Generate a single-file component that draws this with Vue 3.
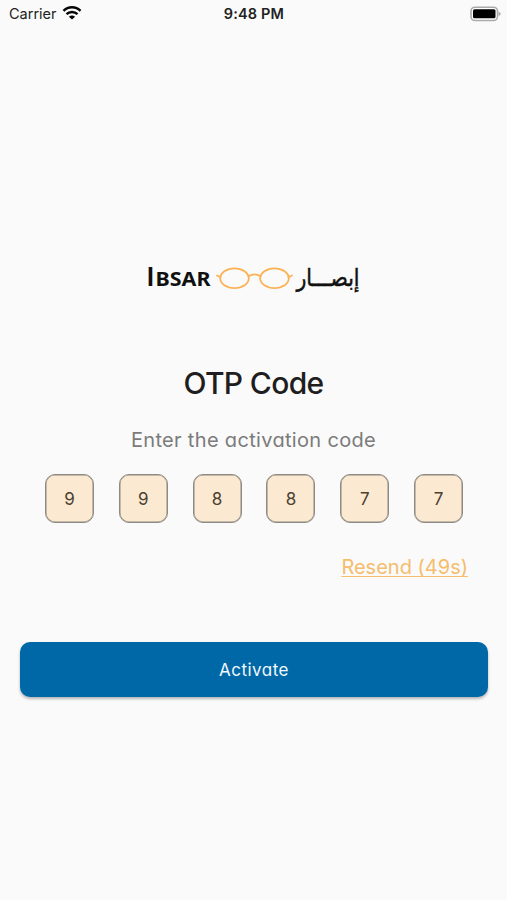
<script setup>
import { ref } from 'vue'

const digits = ref(['9', '9', '8', '8', '7', '7'])
const seconds = ref(49)
</script>

<template>
  <main class="screen">
    <header class="status">
      <div class="carrier">
        <span>Carrier</span>
        <svg class="wifi" width="20" height="15" viewBox="0 0 20 15">
          <path d="M1.500 4.900C6.200 .1 13.800 .1 18.500 4.900" />
          <path d="M4.500 8.200C7.500 5.200 12.500 5.200 15.500 8.200" />
          <path class="dot" d="M10 13.600L6.900 10.700C8.600 9 11.400 9 13.100 10.700Z" />
        </svg>
      </div>
      <span class="time">9:48 PM</span>
      <svg class="battery" width="31" height="16" viewBox="0 0 31 16">
        <rect class="shell" x="1" y="1.200" width="26.500" height="13.300" rx="4" />
        <rect x="3" y="3.300" width="22.500" height="9" rx="1.500" />
        <path class="tip" d="M28.500 5.500Q33 7.800 28.500 10.200Z" />
      </svg>
    </header>

    <svg class="logo" width="230" height="50" viewBox="0 0 230 50">
      <text class="latin initial" x="6.500" y="31" font-size="26.500">I</text>
      <text class="latin" x="15.500" y="31" font-size="19.500" textLength="55" lengthAdjust="spacingAndGlyphs">BSAR</text>
      <g class="glasses">
        <ellipse cx="94.500" cy="23.300" rx="14.300" ry="9.900" />
        <ellipse cx="134.500" cy="23.300" rx="14.300" ry="9.900" />
        <path d="M108.500 21.200Q114.500 17.500 120.500 21.200M77 20.500Q79 21.800 80.700 22M152 20.500Q150 21.800 148.300 22" />
      </g>
      <text class="arabic" x="156.500" y="30.500" font-size="24" textLength="63" lengthAdjust="spacingAndGlyphs">إبصـــار</text>
    </svg>

    <h1>OTP Code</h1>
    <p class="hint">Enter the activation code</p>

    <div class="otp">
      <span v-for="(digit, i) in digits" :key="i" class="cell">{{ digit }}</span>
    </div>

    <a class="resend">Resend ({{ seconds }}s)</a>
    <button class="activate" type="button">Activate</button>
  </main>
</template>

<style>
body {
  background: #fafafa;
}
</style>

<style scoped>
.screen {
  box-sizing: border-box;
  width: 507px;
  height: 900px;
  display: flex;
  flex-direction: column;
  background: #fafafa;
  color: #1e1e20;
  font-family: Inter, "Liberation Sans", sans-serif;
  font-feature-settings: "cv11", "ss03";
}
.status {
  display: grid;
  grid-template-columns: 1fr auto 1fr;
  align-items: center;
  height: 27px;
  padding: 0 6px 0 7px;
  color: #222;
  font-size: 14.500px;
  font-feature-settings: normal;
}
.carrier {
  display: flex;
  align-items: center;
  gap: 5px;
  padding-left: 2px;
}
.wifi {
  fill: none;
  stroke: #050505;
  stroke-width: 2.500;
}
.wifi .dot {
  fill: #050505;
  stroke: none;
}
.time {
  font-weight: 600;
  letter-spacing: 0.150px;
}
.battery {
  justify-self: end;
}
.shell {
  fill: #fff;
  stroke: #aaa;
  stroke-width: 1.600;
}
.tip {
  fill: #aaa;
}
.logo {
  margin: 228px 0 0 140px;
  overflow: visible;
}
.latin {
  fill: #101010;
  font-family: "Noto Sans", "Open Sans", sans-serif;
  font-weight: 700;
}
.latin.initial {
  font-family: Lato, sans-serif;
}
.arabic {
  fill: #101010;
  stroke: #101010;
  stroke-width: 0.500;
  font-family: "DejaVu Sans", sans-serif;
}
.glasses {
  fill: none;
  stroke: #fbb254;
  stroke-width: 1.800;
  stroke-linecap: round;
}
h1 {
  margin: 58px 0 0;
  text-align: center;
  font-size: 30px;
  line-height: 40px;
  font-weight: 550;
  letter-spacing: -0.650px;
}
.hint {
  margin: 22px 0 0;
  text-align: center;
  color: #7b7b7b;
  font-size: 20px;
  line-height: 30px;
  letter-spacing: 0.330px;
}
.otp {
  display: flex;
  justify-content: space-between;
  margin: 19px 44px 0 45px;
}
.cell {
  box-sizing: border-box;
  width: 49px;
  height: 49px;
  border: 1px solid #8e8983;
  box-shadow: inset 0 0 0 0.500px #8e8983;
  border-radius: 10px;
  background: #fbead1;
  color: #4b4032;
  font-size: 17px;
  line-height: 48px;
  text-align: center;
}
.resend {
  align-self: flex-end;
  margin: 29px 39px 0 0;
  color: #f5bd6c;
  font-size: 20px;
  line-height: 30px;
  text-decoration: underline;
  text-decoration-thickness: 1px;
  text-underline-offset: 2px;
  text-decoration-skip-ink: none;
}
.activate {
  height: 55px;
  margin: 60px 19px 0 20px;
  padding: 0;
  border: 0;
  border-radius: 10px;
  background: #0068a7;
  color: #f2f8fc;
  font: inherit;
  font-feature-settings: inherit;
  font-size: 17px;
  letter-spacing: 0.500px;
  box-shadow: 0 2px 3px rgba(0, 0, 0, 0.28);
}
</style>
